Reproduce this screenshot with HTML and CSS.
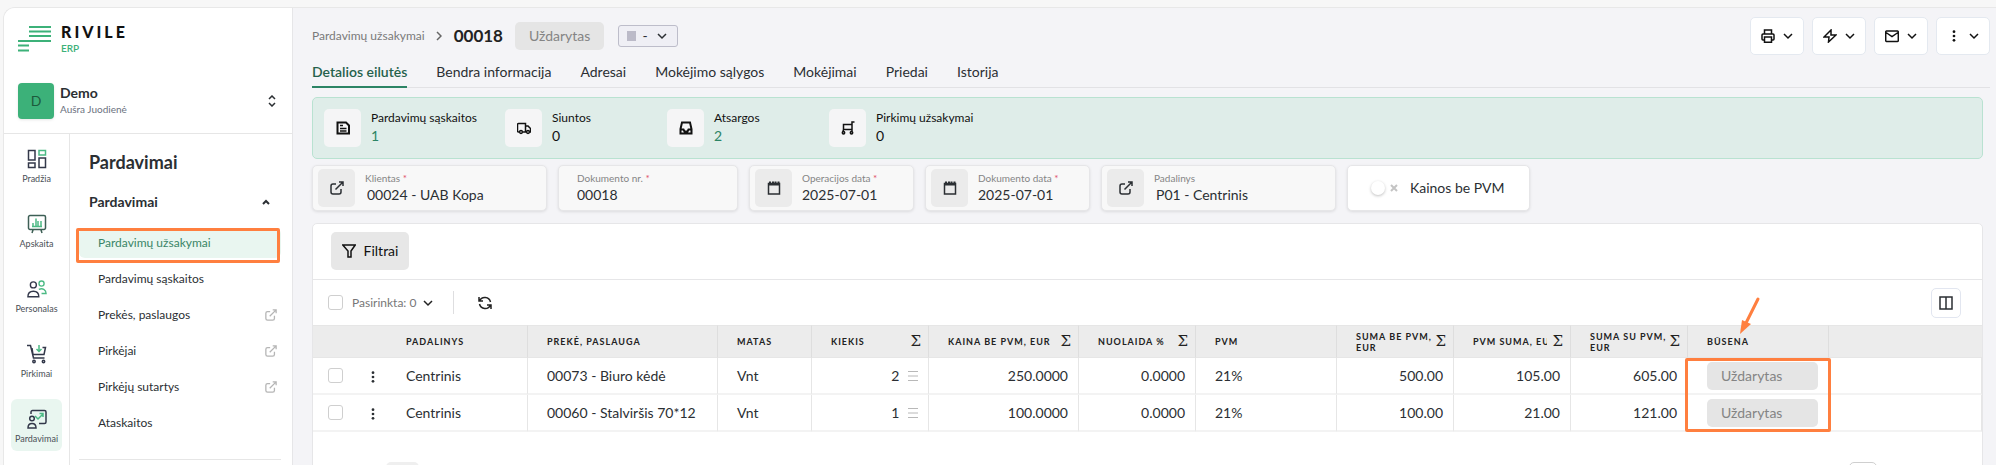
FILE: index.html
```html
<!DOCTYPE html>
<html lang="lt">
<head>
    <meta charset="UTF-8">
    <meta name="viewport" content="width=device-width, initial-scale=1.0">
    <title>Rivile ERP - Pardavimų užsakymai</title>
    <link rel="stylesheet" href="styles.css">
</head>
<body>
    <!-- shared icons -->
    <svg class="sprite" aria-hidden="true">
        <symbol id="down" viewBox="0 0 10 10"><path d="M1 3l4 4 4-4"/></symbol>
        <symbol id="link" viewBox="0 0 14 14"><path d="M6 3H3a2 2 0 0 0-2 2v6a2 2 0 0 0 2 2h6a2 2 0 0 0 2-2V8M9 1h4v4M13 1L5.500 8.500"/></symbol>
        <symbol id="calendar" viewBox="0 0 14 14"><path d="M1.500 2.500h11v10.500h-11z"/><path d="M1 3.500h12M3 .5v2M6 .5v2M8.500 .5v2M11.500 .5v2" stroke-width="2"/></symbol>
        <symbol id="dots" viewBox="0 0 4 14"><g fill="currentColor" stroke="none"><circle cx="2" cy="2" r="1.600"/><circle cx="2" cy="7" r="1.600"/><circle cx="2" cy="12" r="1.600"/></g></symbol>
        <symbol id="lines" viewBox="0 0 10 10"><path d="M0 .5h10M0 5h10M0 9.500h10"/></symbol>
    </svg>

    <div class="app">
        <aside class="sidebar">
            <div class="sidebar-top">
                <a href="#" class="logo">
                    <svg width="33" height="26" viewBox="0 0 33 26"><path d="M11 1h22M11 5.500h22M11 10h22M0 15h33M0 19.500h11M0 24.500h11" stroke="#3cb179" stroke-width="2"/></svg>
                    <span><b>RIVILE</b><small>ERP</small></span>
                </a>
                <button type="button" class="account">
                    <span class="avatar">D</span>
                    <span class="account-text"><b>Demo</b><small>Aušra Juodienė</small></span>
                    <svg class="icon" width="8" height="12" viewBox="0 0 8 12"><path d="M1 4l3-3 3 3M1 8l3 3 3-3"/></svg>
                </button>
            </div>
            <div class="sidebar-body">
                <nav class="rail">
                    <a href="#">
                        <svg class="icon" viewBox="0 0 20 20"><path d="M1.500 1.500h6.500v9.500h-6.500zM12 9h6.500v9.500h-6.500zM1.500 14h6.500v4.500h-6.500z"/><path class="green" d="M12 1.500h6.500v4.500h-6.500z"/></svg>
                        Pradžia
                    </a>
                    <a href="#">
                        <svg class="icon" viewBox="0 0 20 20"><path stroke="#3d5f55" d="M3 1.500h14a1.500 1.500 0 0 1 1.500 1.500v11a1.500 1.500 0 0 1-1.500 1.500H3A1.500 1.500 0 0 1 1.500 14V3A1.500 1.500 0 0 1 3 1.500zM6 16l-1 3M14 16l1 3"/><path class="green" d="M5 12.500h10M6 12V9M9 12V4.500M11 12V7M14 12V7"/></svg>
                        Apskaita
                    </a>
                    <a href="#">
                        <svg class="icon" viewBox="0 0 22 20"><circle cx="7" cy="5.500" r="3.300"/><path d="M1 18.500c0-4 2-6 6-6s6 2 6 6z"/><g class="green"><circle cx="16" cy="4" r="2.800"/><path d="M13 10.500c4-2 8 0 8 4.500h-5"/></g></svg>
                        Personalas
                    </a>
                    <a href="#">
                        <svg class="icon" viewBox="0 0 20 20"><path d="M0 1.500h3.500l3 12.500h11M5 4l1 6.500h11l1.500-7h-3M6.500 14h11"/><circle cx="7" cy="17.500" r="1.200"/><circle cx="16.500" cy="17.500" r="1.200"/><path class="green" d="M12 1v6M9.500 5l2.500 2.500L14.500 5"/></svg>
                        Pirkimai
                    </a>
                    <a href="#" class="active">
                        <svg class="icon" viewBox="0 0 20 20"><path d="M4 5V3a1.500 1.500 0 0 1 1.500-1.500h12A1.500 1.500 0 0 1 19 3v10a1.500 1.500 0 0 1-1.500 1.500H12"/><circle cx="5" cy="9.500" r="2.300"/><path d="M1 19c0-3 1-4.500 4-4.500s4 1.500 4 4.500z"/><path class="green" d="M8 7l3 3 5-5M12.500 4.500h3.500v3.500"/></svg>
                        Pardavimai
                    </a>
                </nav>
                <nav class="menu">
                    <h2>Pardavimai</h2>
                    <button type="button" class="menu-group">
                        Pardavimai
                        <svg class="icon" width="8" height="6" viewBox="0 0 8 6"><path d="M1 5l3-3 3 3" stroke-width="2"/></svg>
                    </button>
                    <ul>
                        <li><a href="#" class="active">Pardavimų užsakymai</a><span class="mark"></span></li>
                        <li><a href="#">Pardavimų sąskaitos</a></li>
                        <li><a href="#">Prekės, paslaugos <svg class="icon"><use href="#link"/></svg></a></li>
                        <li><a href="#">Pirkėjai <svg class="icon"><use href="#link"/></svg></a></li>
                        <li><a href="#">Pirkėjų sutartys <svg class="icon"><use href="#link"/></svg></a></li>
                        <li><a href="#">Ataskaitos</a></li>
                    </ul>
                </nav>
            </div>
        </aside>

        <main>
            <header>
                <a href="#" class="crumb">Pardavimų užsakymai</a>
                <svg class="icon crumb-arrow" width="6" height="10" viewBox="0 0 6 10"><path d="M1 1l4 4-4 4"/></svg>
                <h1>00018</h1>
                <span class="status">Uždarytas</span>
                <div class="color-select">
                    <span class="swatch"></span>
                    <select aria-label="Spalva"><option>-</option></select>
                    <svg class="icon" width="10" height="10"><use href="#down"/></svg>
                </div>
                <div class="actions">
                    <button type="button" aria-label="Spausdinti">
                        <svg class="icon" width="14" height="14" viewBox="0 0 14 14"><path d="M3.500 5V1h7v4M3.500 11H2a1 1 0 0 1-1-1V6a1 1 0 0 1 1-1h10a1 1 0 0 1 1 1v4a1 1 0 0 1-1 1h-1.500M3.500 8h7v5.200h-7z"/></svg>
                        <svg class="icon" width="10" height="10"><use href="#down"/></svg>
                    </button>
                    <button type="button" aria-label="Veiksmai">
                        <svg class="icon" width="14" height="14" viewBox="0 0 14 14"><path d="M8 1L1 8h5l-.5 5L13 6H8z"/></svg>
                        <svg class="icon" width="10" height="10"><use href="#down"/></svg>
                    </button>
                    <button type="button" aria-label="Siųsti">
                        <svg class="icon" width="14" height="14" viewBox="0 0 14 14"><path d="M1.500 2h11a1 1 0 0 1 .8 1v8.500a1 1 0 0 1-1 1H1.500a1 1 0 0 1-.8-1V3a1 1 0 0 1 .8-1zM1 3.500l6 4 6-4"/></svg>
                        <svg class="icon" width="10" height="10"><use href="#down"/></svg>
                    </button>
                    <button type="button" aria-label="Daugiau">
                        <svg class="icon" width="14" height="12"><use href="#dots"/></svg>
                        <svg class="icon" width="10" height="10"><use href="#down"/></svg>
                    </button>
                </div>
            </header>

            <nav class="tabs">
                <a href="#" class="active">Detalios eilutės</a>
                <a href="#">Bendra informacija</a>
                <a href="#">Adresai</a>
                <a href="#">Mokėjimo sąlygos</a>
                <a href="#">Mokėjimai</a>
                <a href="#">Priedai</a>
                <a href="#">Istorija</a>
            </nav>

            <div class="content">
                <section class="related">
                    <div class="stat">
                        <span class="tile"><svg class="icon" viewBox="0 0 14 14"><path d="M1.500 1.500h8.500l3 3v8h-11.500z" stroke-width="2"/><path d="M4 4.500h3M4 7.500h6.500M4 10h6.500"/></svg></span>
                        <span>Pardavimų sąskaitos<a href="#">1</a></span>
                    </div>
                    <div class="stat">
                        <span class="tile"><svg class="icon" viewBox="0 0 14 14"><path d="M2.500 11H1.500a1 1 0 0 1-1-1V3.500a1 1 0 0 1 1-1h7V11H6M8.500 5h2.500l2.500 2.500V11H12.500M9.500 11h-1"/><circle cx="4" cy="11" r="1.400"/><circle cx="11" cy="11" r="1.400"/></svg></span>
                        <span>Siuntos<i>0</i></span>
                    </div>
                    <div class="stat">
                        <span class="tile"><svg class="icon" viewBox="0 0 14 14"><path d="M1.500 8L3 1.500h8L12.500 8v4.500h-11zM1.500 8.500h3l1 2h3l1-2h3" stroke-width="2"/></svg></span>
                        <span>Atsargos<a href="#">2</a></span>
                    </div>
                    <div class="stat">
                        <span class="tile"><svg class="icon" viewBox="0 0 14 14"><path d="M13.500 1h-2.500v9M11 3.500H2.500v5M11 8.500H2.500L2 10.500"/><circle cx="2.500" cy="11.800" r="1.200"/><circle cx="10.500" cy="11.800" r="1.200"/></svg></span>
                        <span>Pirkimų užsakymai<i>0</i></span>
                    </div>
                </section>

                <form class="fields">
                    <div class="field lookup">
                        <button type="button" class="tile" aria-label="Atidaryti klientą"><svg class="icon"><use href="#link"/></svg></button>
                        <div><label for="client">Klientas <sup>*</sup></label><input id="client" value="00024 - UAB Kopa"></div>
                    </div>
                    <div class="field number">
                        <div><label for="docNo">Dokumento nr. <sup>*</sup></label><input id="docNo" value="00018"></div>
                    </div>
                    <div class="field date">
                        <button type="button" class="tile" aria-label="Kalendorius"><svg class="icon"><use href="#calendar"/></svg></button>
                        <div><label for="opDate">Operacijos data <sup>*</sup></label><input id="opDate" value="2025-07-01"></div>
                    </div>
                    <div class="field date">
                        <button type="button" class="tile" aria-label="Kalendorius"><svg class="icon"><use href="#calendar"/></svg></button>
                        <div><label for="docDate">Dokumento data <sup>*</sup></label><input id="docDate" value="2025-07-01"></div>
                    </div>
                    <div class="field lookup">
                        <button type="button" class="tile" aria-label="Atidaryti padalinį"><svg class="icon"><use href="#link"/></svg></button>
                        <div><label for="unit">Padalinys</label><input id="unit" value="P01 - Centrinis"></div>
                    </div>
                    <div class="field toggle">
                        <input type="checkbox" id="noVat">
                        <svg class="icon" width="8" height="8" viewBox="0 0 8 8"><path d="M1 1l6 6M7 1L1 7"/></svg>
                        <label for="noVat">Kainos be PVM</label>
                    </div>
                </form>

                <section class="card">
                    <div class="filters">
                        <button type="button" class="filter-button">
                            <svg class="icon" width="14" height="14" viewBox="0 0 14 14"><path d="M.8 1h12.400L9 7v6H6V7z"/></svg>
                            Filtrai
                        </button>
                    </div>
                    <div class="toolbar">
                        <input type="checkbox" aria-label="Pasirinkti visus">
                        <button type="button" class="selected">Pasirinkta: 0 <svg class="icon" width="10" height="10"><use href="#down"/></svg></button>
                        <span class="separator"></span>
                        <button type="button" class="refresh" aria-label="Atnaujinti">
                            <svg class="icon" width="14" height="14" viewBox="0 0 14 14"><path d="M1 1v4h4M13 13V9H9M1.500 5A5.800 5.800 0 0 1 12.500 6M12.500 9A5.800 5.800 0 0 1 1.500 8"/></svg>
                        </button>
                        <button type="button" class="columns" aria-label="Stulpeliai">
                            <svg class="icon" width="14" height="14" viewBox="0 0 14 14"><path d="M1 1h12v12H1zM7 1v12"/></svg>
                        </button>
                    </div>
                    <table>
                        <colgroup>
                            <col class="w-check"><col class="w-dots"><col class="w-unit"><col class="w-item"><col class="w-measure"><col class="w-sum"><col class="w-price"><col class="w-sum"><col class="w-vat"><col class="w-sum"><col class="w-sum"><col class="w-sum"><col class="w-state"><col>
                        </colgroup>
                        <thead>
                            <tr>
                                <th class="plain"></th>
                                <th class="plain"></th>
                                <th>Padalinys</th>
                                <th>Prekė, paslauga</th>
                                <th>Matas</th>
                                <th><div><span>Kiekis</span><em>Σ</em></div></th>
                                <th><div><span>Kaina be PVM, EUR</span><em>Σ</em></div></th>
                                <th><div><span>Nuolaida %</span><em>Σ</em></div></th>
                                <th>PVM</th>
                                <th><div><span>Suma be PVM,<br>EUR</span><em>Σ</em></div></th>
                                <th><div><span class="clip">PVM suma, EUR</span><em>Σ</em></div></th>
                                <th><div><span>Suma su PVM,<br>EUR</span><em>Σ</em></div></th>
                                <th class="state">Būsena
                                    <svg class="arrow" width="24" height="40" viewBox="0 0 24 40"><path d="M20 3L8 27" stroke="#ff7f3f" stroke-width="3" stroke-linecap="round"/><path d="M2 38l2-14 9 4z" fill="#ff7f3f"/></svg>
                                </th>
                                <th></th>
                            </tr>
                        </thead>
                        <tbody>
                            <tr>
                                <td class="plain check"><input type="checkbox" aria-label="Pasirinkti 00073"></td>
                                <td class="plain dots"><svg class="icon" width="4" height="12"><use href="#dots"/></svg></td>
                                <td>Centrinis</td>
                                <td>00073 - Biuro kėdė</td>
                                <td>Vnt</td>
                                <td class="num">2 <svg class="icon"><use href="#lines"/></svg></td>
                                <td class="num">250.0000</td>
                                <td class="num">0.0000</td>
                                <td>21%</td>
                                <td class="num">500.00</td>
                                <td class="num">105.00</td>
                                <td class="num">605.00</td>
                                <td class="state"><span class="status">Uždarytas</span><span class="mark"></span></td>
                                <td></td>
                            </tr>
                            <tr>
                                <td class="plain check"><input type="checkbox" aria-label="Pasirinkti 00060"></td>
                                <td class="plain dots"><svg class="icon" width="4" height="12"><use href="#dots"/></svg></td>
                                <td>Centrinis</td>
                                <td>00060 - Stalviršis 70*12</td>
                                <td>Vnt</td>
                                <td class="num">1 <svg class="icon"><use href="#lines"/></svg></td>
                                <td class="num">100.0000</td>
                                <td class="num">0.0000</td>
                                <td>21%</td>
                                <td class="num">100.00</td>
                                <td class="num">21.00</td>
                                <td class="num">121.00</td>
                                <td class="state"><span class="status">Uždarytas</span></td>
                                <td></td>
                            </tr>
                        </tbody>
                    </table>
                    <div class="pager">
                        <button type="button" class="page" aria-label="Puslapis"></button>
                        <button type="button" class="page-size" aria-label="Eilučių skaičius"></button>
                    </div>
                </section>
            </div>
        </main>
    </div>
</body>
</html>
```

FILE: styles.css
```css
* {
    box-sizing: border-box;
}

body {
    margin: 0;
    padding: 7px 0 0 3px;
    height: 100vh;
    overflow: hidden;
    background-color: #f7f7f7;
    color: #2b2f33;
    font-family: Lato, "Noto Sans", sans-serif;
    font-size: 14px;
    line-height: 20px;
}

button, input, select {
    font: inherit;
    color: inherit;
    margin: 0;
    padding: 0;
    border: 0;
    background: none;
}

a {
    color: inherit;
    text-decoration: none;
}

.sprite {
    display: none;
}

.icon {
    flex: none;
    fill: none;
    stroke: currentColor;
    stroke-width: 1.5;
}

.app {
    display: flex;
    height: 100%;
    border: 1px solid #e8e8e8;
    border-right: 0;
    border-bottom: 0;
    border-radius: 12px 0 0 0;
    overflow: hidden;
    background-color: #f4f4f7;
}

/* sidebar */
.sidebar {
    flex: none;
    display: flex;
    flex-direction: column;
    width: 289px;
    background-color: white;
    border-right: 1px solid #e6e6e8;
}

.sidebar-top {
    flex: none;
    height: 126px;
    padding: 15px 16px 0 14px;
    border-bottom: 1px solid #e6e6e6;
}

.logo {
    display: flex;
    gap: 10px;
    height: 60px;
}

.logo svg {
    margin-top: 3px;
}

.logo b, .logo small {
    display: block;
}

.logo b {
    font-size: 16px;
    line-height: 18px;
    font-weight: 900;
    letter-spacing: 3px;
    color: #111;
}

.logo small {
    font-size: 10px;
    line-height: 14px;
    font-weight: 600;
    color: #3cb179;
}

.account {
    display: flex;
    align-items: center;
    gap: 6px;
    width: 100%;
    text-align: left;
}

.avatar {
    width: 36px;
    height: 36px;
    border-radius: 4px;
    background-color: #3cb179;
    color: #1c5a3c;
    font-size: 14px;
    line-height: 36px;
    text-align: center;
    box-shadow: 0 1px 3px rgba(0, 0, 0, 0.1);
}

.account-text {
    flex: 1;
}

.account-text b, .account-text small {
    display: block;
    line-height: 16px;
}

.account-text b {
    font-size: 14px;
}

.account-text small {
    font-size: 10px;
    color: #6b7280;
}

.sidebar-body {
    flex: 1;
    display: flex;
}

.rail {
    display: flex;
    flex-direction: column;
    gap: 13px;
    width: 66px;
    padding: 5px 7px 0;
    border-right: 1px solid #e6e6e6;
}

.rail a {
    display: flex;
    flex-direction: column;
    align-items: center;
    gap: 4px;
    flex: none;
    height: 52px;
    padding-top: 10px;
    border-radius: 6px;
    font-size: 9px;
    line-height: 12px;
    color: #4b5057;
}

.rail .icon {
    width: 20px;
    height: 20px;
    color: #33384a;
}

.rail .green {
    stroke: #4cba85;
}

.rail .active, .menu .active {
    background-color: #e9f6f0;
}

.menu {
    flex: 1;
    padding: 18px 11px 0 9px;
}

.menu h2 {
    margin: 0 0 20px 10px;
    font-size: 18px;
    line-height: 20px;
}

.menu-group {
    display: flex;
    align-items: center;
    justify-content: space-between;
    width: 100%;
    padding: 0 11px 0 10px;
    font-weight: bold;
}

.menu ul {
    margin: 16px 0 0;
    padding: 0 0 15px;
    border-bottom: 1px solid #e6e6e6;
    list-style: none;
}

.menu li {
    position: relative;
    margin-bottom: 6px;
}

.menu li a {
    display: flex;
    align-items: center;
    justify-content: space-between;
    height: 30px;
    padding: 0 4px 0 19px;
    border-radius: 6px;
    font-size: 12px;
}

.menu li .active {
    color: #3a8567;
}

.menu li .icon {
    width: 12px;
    height: 12px;
    color: #b5b5b5;
}

/* orange frames around highlighted places */
.mark {
    position: absolute;
    border: 3px solid #ff7f3f;
    border-radius: 2px;
}

.menu .mark {
    inset: 0 1px -5px -3px;
}

/* main */
main {
    flex: 1;
    min-width: 0;
    padding: 9px 6px 0 19px;
}

header {
    display: flex;
    align-items: center;
    height: 38px;
}

.crumb {
    font-size: 12px;
    color: #7a7a7a;
}

.crumb-arrow {
    margin: 0 12px 0 11px;
    color: #666;
}

h1 {
    margin: 0 12px 0 0;
    font-size: 17px;
    line-height: 20px;
    color: #222;
}

.status {
    display: block;
    height: 28px;
    padding: 0 14px;
    border-radius: 5px;
    background-color: #e5e5e5;
    color: #848484;
    line-height: 28px;
}

.color-select {
    display: flex;
    align-items: center;
    position: relative;
    width: 60px;
    height: 22px;
    margin-left: 14px;
    padding: 0 10px 0 8px;
    border: 1px solid #bdbdca;
    border-radius: 3px;
    background-color: #efeff5;
}

.swatch {
    width: 9px;
    height: 10px;
    background-color: #bbbac8;
}

.color-select select {
    flex: 1;
    min-width: 0;
    padding-left: 6px;
    appearance: none;
}

.actions {
    display: flex;
    gap: 8px;
    margin-left: auto;
}

.actions button {
    display: flex;
    align-items: center;
    justify-content: center;
    gap: 8px;
    width: 54px;
    height: 38px;
    border: 1px solid #e4e9f0;
    border-radius: 5px;
    background-color: white;
    color: #111;
}

.tabs {
    display: flex;
    gap: 29px;
    height: 33px;
    border-bottom: 1px solid #e2e2e5;
}

.tabs a {
    height: 33px;
    padding-top: 7px;
}

.tabs .active {
    border-bottom: 2px solid #2c8465;
    color: #25614c;
    font-weight: 600;
}

.content {
    padding-right: 7px;
}

.related {
    display: grid;
    grid-template-columns: 181px 162px 162px auto;
    height: 62px;
    margin-top: 9px;
    padding: 11px;
    border: 1px solid #b9e2d1;
    border-radius: 5px;
    background-color: #dfede9;
}

.stat {
    display: flex;
    gap: 10px;
    font-size: 12px;
    line-height: 18px;
    color: #111;
}

.stat a, .stat i {
    display: block;
    font-size: 14px;
    font-style: normal;
}

.stat a {
    color: #2c8465;
}

.tile {
    display: flex;
    flex: none;
    align-items: center;
    justify-content: center;
    width: 37px;
    height: 38px;
    border-radius: 5px;
    background-color: #f5f5f6;
}

.tile .icon {
    width: 14px;
    height: 14px;
}

/* document fields */
.fields {
    display: flex;
    gap: 11px;
    margin: 6px 0 12px;
}

.field {
    display: flex;
    align-items: center;
    gap: 10px;
    height: 46px;
    padding: 0 5px;
    border: 1px solid #e6e6e8;
    border-radius: 5px;
    background-color: #f8f8f8;
    box-shadow: 0 1px 3px rgba(0, 0, 0, 0.1);
}

.field .tile {
    background-color: #ebebeb;
}

.field div {
    flex: 1;
    min-width: 0;
}

.field div label {
    display: block;
    font-size: 10px;
    line-height: 14px;
    color: #858585;
}

.field sup {
    font-size: 10px;
    line-height: 0;
    vertical-align: baseline;
    color: #e0506a;
}

.field div input {
    display: block;
    width: 100%;
    height: 20px;
}

.lookup {
    width: 235px;
}

.lookup div input {
    padding-left: 2px;
}

.number {
    width: 180px;
    padding-left: 18px;
}

.date {
    width: 165px;
}

.toggle {
    width: 183px;
    gap: 5px;
    padding-left: 23px;
    background-color: white;
}

.toggle input {
    appearance: none;
    width: 14px;
    height: 14px;
    border-radius: 50%;
    background-color: white;
    box-shadow: 0 1px 3px rgba(0, 0, 0, 0.25);
}

.toggle .icon {
    margin-right: 7px;
    color: #c4c4c4;
    stroke-width: 2;
}

/* order lines */
.card {
    border: 1px solid #e6e6e8;
    border-radius: 5px 5px 0 0;
    background-color: white;
    height: 400px;
}

.filters {
    padding: 8px 18px 9px;
    border-bottom: 1px solid #e6e6e8;
}

.filter-button {
    display: flex;
    align-items: center;
    justify-content: center;
    gap: 8px;
    width: 78px;
    height: 38px;
    border-radius: 5px;
    background-color: #e7e7e7;
    color: #111;
}

.toolbar {
    display: flex;
    align-items: center;
    height: 45px;
    padding: 0 21px 0 15px;
}

.toolbar input, td input {
    appearance: none;
    display: block;
    width: 15px;
    height: 15px;
    border: 1px solid #cfcfcf;
    border-radius: 3px;
}

.selected {
    display: flex;
    align-items: center;
    gap: 7px;
    margin-left: 9px;
    font-size: 12px;
    color: #777;
}

.selected .icon, .refresh {
    color: #222;
}

.separator {
    width: 1px;
    height: 23px;
    margin: 0 24px 0 20px;
    background-color: #dedee0;
}

.refresh {
    display: flex;
}

.columns {
    display: flex;
    align-items: center;
    justify-content: center;
    width: 30px;
    height: 30px;
    margin-left: auto;
    border: 1px solid #e2e6f0;
    border-radius: 5px;
}

table {
    width: 100%;
    table-layout: fixed;
    border-collapse: separate;
    border-spacing: 0;
}

.w-check { width: 45px; }
.w-dots { width: 29px; }
.w-unit { width: 141px; }
.w-item { width: 190px; }
.w-measure { width: 94px; }
.w-sum { width: 117px; }
.w-price { width: 150px; }
.w-vat { width: 141px; }
.w-state { width: 141px; }

th, td {
    padding: 0 0 0 19px;
    border-right: 1px solid #e6e6e6;
    text-align: left;
}

th {
    height: 33px;
    border-top: 1px solid #e6e6e6;
    border-bottom: 1px solid #e6e6e6;
    border-right-color: #dedede;
    background-color: #ececec;
    color: #222;
    font-size: 9px;
    line-height: 11px;
    letter-spacing: 1px;
    text-transform: uppercase;
    white-space: nowrap;
}

th:last-child {
    border-right: 0;
}

th.plain, td.plain {
    padding: 0;
    border-right: 0;
}

th div {
    display: flex;
    align-items: center;
    padding-right: 7px;
}

th span {
    flex: 1;
    min-width: 0;
}

.clip {
    margin-right: 5px;
    overflow: hidden;
}

th em {
    font-family: "DejaVu Serif", serif;
    font-size: 15px;
    font-style: normal;
    font-weight: normal;
    letter-spacing: 0;
}

td {
    height: 37px;
    border-bottom: 2px solid #f3f3f3;
}

td.check {
    padding-left: 15px;
}

td.dots {
    text-align: center;
}

td.dots .icon {
    vertical-align: middle;
}

.num {
    padding-right: 10px;
    text-align: right;
}

.num .icon {
    width: 10px;
    height: 10px;
    margin-left: 5px;
    color: #b8b8b8;
    stroke-width: 1;
}

.state {
    position: relative;
}

td.state {
    padding-right: 10px;
}

.arrow {
    position: absolute;
    left: 50px;
    top: -30px;
    fill: none;
}

.state .mark {
    z-index: 1;
    inset: 0 -3px -39px -3px;
}

.pager {
    display: flex;
    justify-content: space-between;
    padding: 30px 105px 0 73px;
}

.page {
    width: 33px;
    height: 30px;
    border-radius: 5px;
    background-color: #efefef;
}

.page-size {
    width: 28px;
    height: 30px;
    border: 1px solid #cfcfcf;
    border-radius: 5px;
}
```
